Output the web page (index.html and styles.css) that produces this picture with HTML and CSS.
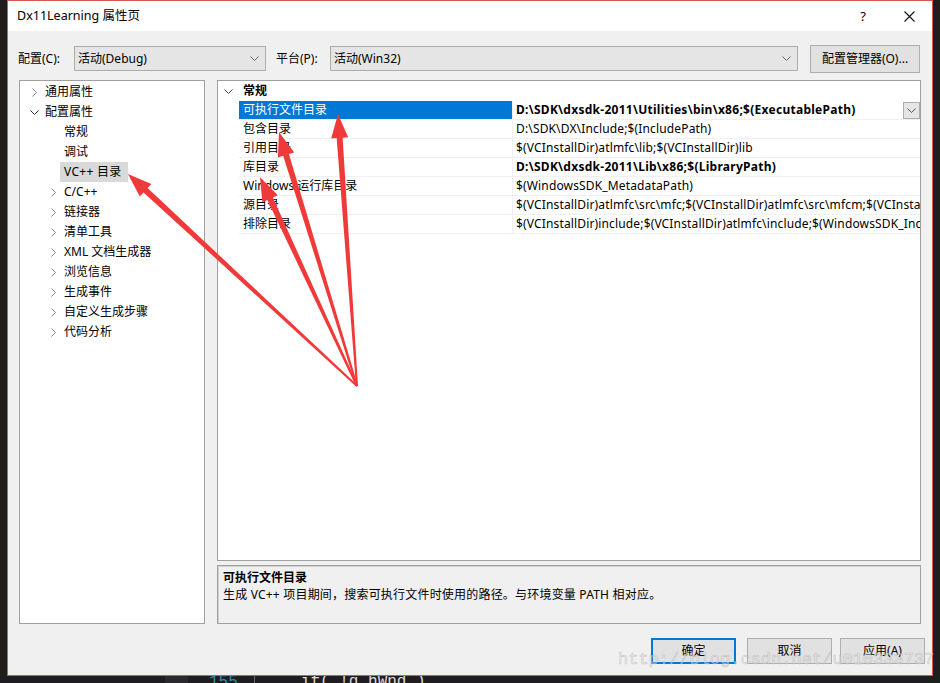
FILE: index.html
```html
<!DOCTYPE html>
<html lang="zh-CN">
<head>
<meta charset="utf-8">
<title>Dx11Learning 属性页</title>
<link rel="stylesheet" href="styles.css">
</head>
<body>
<div class="window">
  <div class="titlebar">
    <span class="title">Dx11Learning 属性页</span>
    <span class="help">?</span>
    <span class="close"><svg width="11" height="11" viewBox="0 0 11 11"><path d="M0.5 0.5 L10.5 10.5 M10.5 0.5 L0.5 10.5" stroke="#111" stroke-width="1.1" fill="none"/></svg></span>
  </div>

  <div class="config-row">
    <span class="label lbl-config">配置(C):</span>
    <div class="combo combo-config">
      <span>活动(Debug)</span>
      <svg width="9" height="5" viewBox="0 0 9 5"><polyline points="0.5,0.5 4.5,4.5 8.5,0.5" fill="none" stroke="#666"/></svg>
    </div>
    <span class="label lbl-platform">平台(P):</span>
    <div class="combo combo-platform">
      <span>活动(Win32)</span>
      <svg width="9" height="5" viewBox="0 0 9 5"><polyline points="0.5,0.5 4.5,4.5 8.5,0.5" fill="none" stroke="#666"/></svg>
    </div>
    <button class="btn btn-manager">配置管理器(O)...</button>
  </div>

  <div class="main">
    <div class="tree">
      <div class="tree-row lvl0"><span class="chev-slot"><svg class="chev-r" width="5" height="9" viewBox="0 0 5 9"><polyline points="0.5,0.5 4.5,4.5 0.5,8.5" fill="none" stroke="#888"/></svg></span><span class="node">通用属性</span></div>
      <div class="tree-row lvl0"><span class="chev-slot"><svg width="9" height="5" viewBox="0 0 9 5"><polyline points="0.5,0.5 4.5,4.5 8.5,0.5" fill="none" stroke="#333"/></svg></span><span class="node">配置属性</span></div>
      <div class="tree-row lvl1"><span class="chev-slot"></span><span class="node">常规</span></div>
      <div class="tree-row lvl1"><span class="chev-slot"></span><span class="node">调试</span></div>
      <div class="tree-row lvl1"><span class="chev-slot"></span><span class="node sel">VC++ 目录</span></div>
      <div class="tree-row lvl1"><span class="chev-slot"><svg width="5" height="9" viewBox="0 0 5 9"><polyline points="0.5,0.5 4.5,4.5 0.5,8.5" fill="none" stroke="#888"/></svg></span><span class="node">C/C++</span></div>
      <div class="tree-row lvl1"><span class="chev-slot"><svg width="5" height="9" viewBox="0 0 5 9"><polyline points="0.5,0.5 4.5,4.5 0.5,8.5" fill="none" stroke="#888"/></svg></span><span class="node">链接器</span></div>
      <div class="tree-row lvl1"><span class="chev-slot"><svg width="5" height="9" viewBox="0 0 5 9"><polyline points="0.5,0.5 4.5,4.5 0.5,8.5" fill="none" stroke="#888"/></svg></span><span class="node">清单工具</span></div>
      <div class="tree-row lvl1"><span class="chev-slot"><svg width="5" height="9" viewBox="0 0 5 9"><polyline points="0.5,0.5 4.5,4.5 0.5,8.5" fill="none" stroke="#888"/></svg></span><span class="node">XML 文档生成器</span></div>
      <div class="tree-row lvl1"><span class="chev-slot"><svg width="5" height="9" viewBox="0 0 5 9"><polyline points="0.5,0.5 4.5,4.5 0.5,8.5" fill="none" stroke="#888"/></svg></span><span class="node">浏览信息</span></div>
      <div class="tree-row lvl1"><span class="chev-slot"><svg width="5" height="9" viewBox="0 0 5 9"><polyline points="0.5,0.5 4.5,4.5 0.5,8.5" fill="none" stroke="#888"/></svg></span><span class="node">生成事件</span></div>
      <div class="tree-row lvl1"><span class="chev-slot"><svg width="5" height="9" viewBox="0 0 5 9"><polyline points="0.5,0.5 4.5,4.5 0.5,8.5" fill="none" stroke="#888"/></svg></span><span class="node">自定义生成步骤</span></div>
      <div class="tree-row lvl1"><span class="chev-slot"><svg width="5" height="9" viewBox="0 0 5 9"><polyline points="0.5,0.5 4.5,4.5 0.5,8.5" fill="none" stroke="#888"/></svg></span><span class="node">代码分析</span></div>
    </div>

    <div class="right">
      <div class="grid">
        <div class="grid-header">
          <span class="gutter"><svg width="9" height="5" viewBox="0 0 9 5"><polyline points="0.5,0.5 4.5,4.5 8.5,0.5" fill="none" stroke="#444"/></svg></span>
          <span class="cat">常规</span>
        </div>
        <div class="grid-row selected">
          <span class="gutter"></span>
          <span class="name">可执行文件目录</span>
          <span class="value bold"><span class="vtext">D:\SDK\dxsdk-2011\Utilities\bin\x86;$(ExecutablePath)</span><span class="dd"><svg width="9" height="5" viewBox="0 0 9 5"><polyline points="0.5,0.5 4.5,4.5 8.5,0.5" fill="none" stroke="#555"/></svg></span></span>
        </div>
        <div class="grid-row">
          <span class="gutter"></span>
          <span class="name">包含目录</span>
          <span class="value"><span class="vtext">D:\SDK\DX\Include;$(IncludePath)</span></span>
        </div>
        <div class="grid-row">
          <span class="gutter"></span>
          <span class="name">引用目录</span>
          <span class="value"><span class="vtext">$(VCInstallDir)atlmfc\lib;$(VCInstallDir)lib</span></span>
        </div>
        <div class="grid-row">
          <span class="gutter"></span>
          <span class="name">库目录</span>
          <span class="value bold"><span class="vtext">D:\SDK\dxsdk-2011\Lib\x86;$(LibraryPath)</span></span>
        </div>
        <div class="grid-row">
          <span class="gutter"></span>
          <span class="name">Windows 运行库目录</span>
          <span class="value"><span class="vtext">$(WindowsSDK_MetadataPath)</span></span>
        </div>
        <div class="grid-row">
          <span class="gutter"></span>
          <span class="name">源目录</span>
          <span class="value"><span class="vtext">$(VCInstallDir)atlmfc\src\mfc;$(VCInstallDir)atlmfc\src\mfcm;$(VCInstallDir)atlmfc\src\atl;$(VCInstallDir)crt\src</span></span>
        </div>
        <div class="grid-row">
          <span class="gutter"></span>
          <span class="name">排除目录</span>
          <span class="value"><span class="vtext">$(VCInstallDir)include;$(VCInstallDir)atlmfc\include;$(WindowsSDK_IncludePath);$(MSBuild_ExecutablePath)</span></span>
        </div>
      </div>
      <div class="desc">
        <div class="desc-title">可执行文件目录</div>
        <div class="desc-text">生成 VC++ 项目期间，搜索可执行文件时使用的路径。与环境变量 PATH 相对应。</div>
      </div>
    </div>
  </div>

  <div class="footer">
    <button class="btn btn-ok">确定</button>
    <button class="btn btn-cancel">取消</button>
    <button class="btn btn-apply">应用(A)</button>
  </div>
</div>

<div class="code-strip">
  <div class="code-line"><span class="gutter-block"></span><span class="ln">155</span><span class="guide"></span><span class="code">if( !g_hWnd )</span></div>
</div>

<svg class="annot" width="940" height="683" viewBox="0 0 940 683">
  <g fill="#f03a3a">
    <g transform="translate(357 386) rotate(-94.0)"><polygon points="0,-1 248.7,-3 248.7,-8.5 272.7,0 248.7,8.5 248.7,3 0,1"/></g>
    <g transform="translate(357 386) rotate(-107.07)"><polygon points="0,-1 241.7,-3 241.7,-8.5 265.7,0 241.7,8.5 241.7,3 0,1"/></g>
    <g transform="translate(357 386) rotate(-114.9)"><polygon points="0,-1 206.4,-3 206.4,-8.5 230.4,0 206.4,8.5 206.4,3 0,1"/></g>
    <g transform="translate(357 386) rotate(-137.21)"><polygon points="0,-1 288.1,-3 288.1,-8.5 312.1,0 288.1,8.5 288.1,3 0,1"/></g>
  </g>
</svg>

<div class="watermark">http://blog.csdn.net/u010333737</div>
</body>
</html>
```

FILE: styles.css
```css
html, body {
  margin: 0;
  padding: 0;
}

body {
  width: 940px;
  height: 683px;
  overflow: hidden;
  position: relative;
  background: #1e1e1e;
  font-family: "Noto Sans", "Noto Sans CJK SC", sans-serif;
  font-size: 12px;
  color: #000;
}

.window {
  margin-left: 7px;
  width: 926px;
  height: 676px;
  box-sizing: border-box;
  border: 1px solid #d6574f;
  background: #f0f0f0;
  display: flex;
  flex-direction: column;
}

/* title bar */
.titlebar {
  height: 30px;
  flex-shrink: 0;
  background: #fff;
  display: flex;
  align-items: center;
  padding-left: 9px;
}

.title {
  flex: 1;
  line-height: 16px;
  font-size: 12.5px;
}

.help {
  width: 46px;
  text-align: center;
  font-size: 13px;
  line-height: 16px;
}

.close {
  width: 46px;
  display: flex;
  justify-content: center;
  align-items: center;
}

/* configuration row */
.config-row {
  height: 49px;
  flex-shrink: 0;
  box-sizing: border-box;
  padding: 6px 0 0 10px;
  display: flex;
  align-items: center;
}

.label {
  line-height: 16px;
}

.lbl-config {
  width: 56px;
}

.lbl-platform {
  margin-left: 10px;
  width: 54px;
}

.combo {
  height: 25px;
  box-sizing: border-box;
  border: 1px solid #adadad;
  background: #e5e5e5;
  display: flex;
  align-items: center;
  justify-content: space-between;
  padding: 0 6px 0 3px;
  line-height: 16px;
}

.combo-config {
  width: 192px;
}

.combo-platform {
  width: 468px;
}

.btn {
  font-family: "Noto Sans", "Noto Sans CJK SC", sans-serif;
  font-size: 12px;
  color: #000;
  background: #e1e1e1;
  border: 1px solid #adadad;
  padding: 0;
  margin: 0;
  box-sizing: border-box;
  line-height: 16px;
}

.btn-manager {
  margin-left: 12px;
  width: 110px;
  height: 28px;
}

/* main area */
.main {
  height: 544px;
  flex-shrink: 0;
  display: flex;
  gap: 12px;
  padding-left: 11px;
}

.tree {
  width: 186px;
  box-sizing: border-box;
  border: 1px solid #a0a0a0;
  background: #fff;
  padding-top: 1px;
}

.tree-row {
  height: 20px;
  display: flex;
  align-items: center;
}

.lvl0 {
  padding-left: 8px;
}

.lvl1 {
  padding-left: 27px;
}

.chev-slot {
  width: 12px;
  height: 20px;
  margin-right: 1px;
  display: flex;
  align-items: center;
  justify-content: center;
}

.node {
  padding: 0 4px;
  line-height: 20px;
  white-space: nowrap;
}

.node.sel {
  background: #d9d9d9;
  padding-right: 6px;
  letter-spacing: 0.3px;
}

.right {
  width: 704px;
  display: flex;
  flex-direction: column;
  gap: 4px;
}

.grid {
  height: 481px;
  box-sizing: border-box;
  border: 1px solid #a0a0a0;
  background: #fff;
}

.grid-header {
  height: 20px;
  display: flex;
  align-items: center;
}

.gutter {
  width: 21px;
  flex-shrink: 0;
  display: flex;
  justify-content: center;
  align-items: center;
}

.cat {
  font-weight: bold;
  padding-left: 4px;
  line-height: 20px;
}

.grid-row {
  height: 19px;
  display: flex;
}

.name {
  width: 273px;
  flex-shrink: 0;
  box-sizing: border-box;
  border-bottom: 1px solid #f0f0f0;
  padding-left: 4px;
  line-height: 18px;
  white-space: nowrap;
  overflow: hidden;
}

.grid-row.selected .name {
  background: #0078d7;
  color: #fff;
}

.value {
  flex: 1;
  min-width: 0;
  box-sizing: border-box;
  border-bottom: 1px solid #f0f0f0;
  border-left: 1px solid #f0f0f0;
  padding-left: 3px;
  display: flex;
  align-items: center;
  overflow: hidden;
  white-space: nowrap;
  line-height: 18px;
  letter-spacing: 0.15px;
}

.value.bold {
  font-weight: bold;
  letter-spacing: 0.27px;
}

.vtext {
  white-space: nowrap;
}

.dd {
  margin-left: auto;
  width: 17px;
  height: 17px;
  flex-shrink: 0;
  box-sizing: border-box;
  border: 1px solid #adadad;
  background: #e5e5e5;
  display: flex;
  align-items: center;
  justify-content: center;
}

.desc {
  height: 59px;
  box-sizing: border-box;
  border: 1px solid #a0a0a0;
  box-shadow: inset 1px 1px 0 #d0d0d0;
  padding: 3px 0 0 5px;
}

.desc-title {
  font-weight: bold;
  line-height: 17px;
}

.desc-text {
  line-height: 17px;
  letter-spacing: 0.2px;
}

/* footer */
.footer {
  flex: 1;
  display: flex;
  justify-content: flex-end;
  align-items: flex-start;
  padding: 14px 7px 0 0;
}

.footer .btn {
  width: 85px;
  height: 26px;
}

.btn-ok {
  border: 2px solid #0078d7;
}

.btn-cancel {
  margin-left: 11px;
}

.btn-apply {
  margin-left: 8px;
}

/* editor strip behind dialog */
.code-strip {
  height: 7px;
  overflow: hidden;
}

.code-line {
  margin-top: -2px;
  height: 16px;
  display: flex;
  font-family: "Liberation Mono", monospace;
  font-size: 16px;
  line-height: 16px;
  white-space: pre;
}

.gutter-block {
  margin-left: 165px;
  width: 23px;
  background: #2a2a2a;
}

.ln {
  margin-left: 21px;
  color: #2b91af;
}

.guide {
  margin-left: 16px;
  width: 1px;
  background: #6a6a6a;
}

.code {
  margin-left: 46px;
  color: #dcdcdc;
}

/* annotation overlay */
.annot {
  position: absolute;
  left: 0;
  top: 0;
  pointer-events: none;
}

.watermark {
  position: absolute;
  left: 618px;
  top: 651px;
  font-family: "Liberation Mono", monospace;
  font-size: 17px;
  line-height: 17px;
  color: rgba(235, 235, 235, 0.55);
  -webkit-text-stroke: 0.6px rgba(150, 150, 150, 0.45);
  white-space: nowrap;
  pointer-events: none;
}
```
